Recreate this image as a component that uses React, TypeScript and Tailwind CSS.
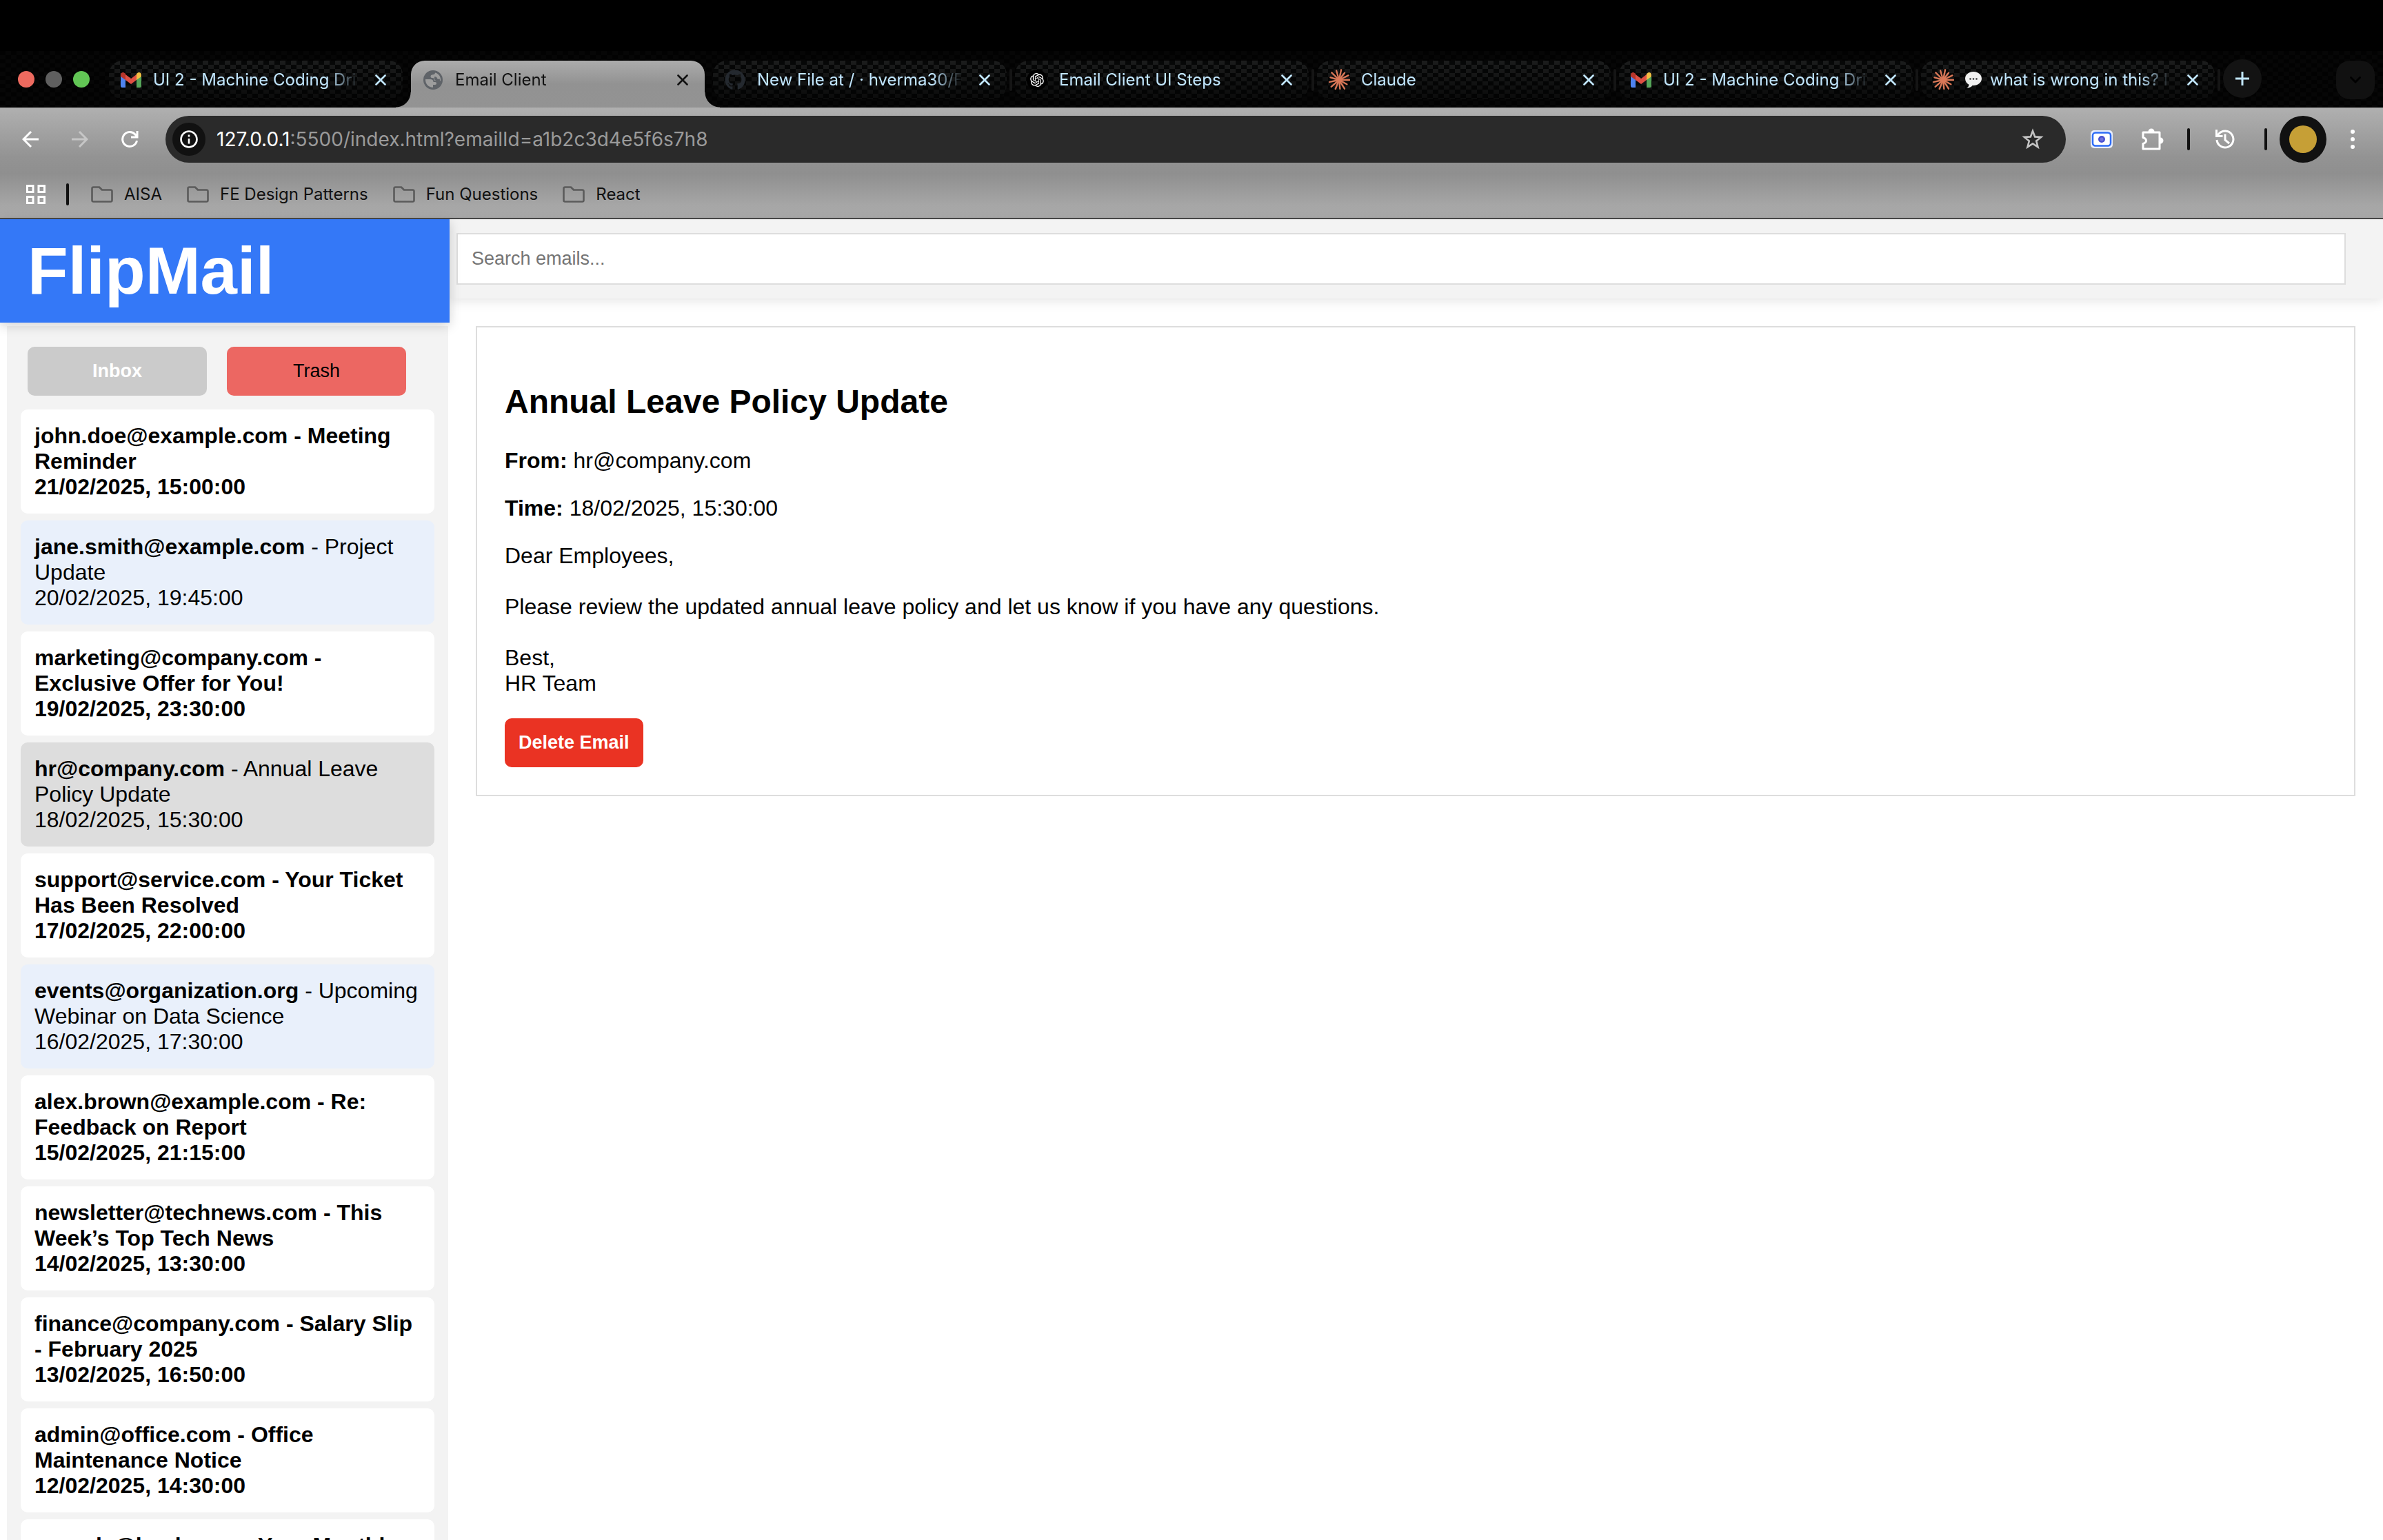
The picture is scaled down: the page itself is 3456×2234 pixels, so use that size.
import type { ReactNode } from "react";
import { FaGithub } from "react-icons/fa";
import { RiOpenaiFill } from "react-icons/ri";

type Email = { id: string; from: string; subject: string; time: string; state: "unread" | "read" | "open" };

const emails: Email[] = [
  { id: "1", from: "john.doe@example.com", subject: "Meeting Reminder", time: "21/02/2025, 15:00:00", state: "unread" },
  { id: "2", from: "jane.smith@example.com", subject: "Project Update", time: "20/02/2025, 19:45:00", state: "read" },
  { id: "3", from: "marketing@company.com", subject: "Exclusive Offer for You!", time: "19/02/2025, 23:30:00", state: "unread" },
  { id: "a1b2c3d4e5f6s7h8", from: "hr@company.com", subject: "Annual Leave Policy Update", time: "18/02/2025, 15:30:00", state: "open" },
  { id: "5", from: "support@service.com", subject: "Your Ticket Has Been Resolved", time: "17/02/2025, 22:00:00", state: "unread" },
  { id: "6", from: "events@organization.org", subject: "Upcoming Webinar on Data Science", time: "16/02/2025, 17:30:00", state: "read" },
  { id: "7", from: "alex.brown@example.com", subject: "Re: Feedback on Report", time: "15/02/2025, 21:15:00", state: "unread" },
  { id: "8", from: "newsletter@technews.com", subject: "This Week’s Top Tech News", time: "14/02/2025, 13:30:00", state: "unread" },
  { id: "9", from: "finance@company.com", subject: "Salary Slip - February 2025", time: "13/02/2025, 16:50:00", state: "unread" },
  { id: "10", from: "admin@office.com", subject: "Office Maintenance Notice", time: "12/02/2025, 14:30:00", state: "unread" },
  { id: "11", from: "noreply@bank.com", subject: "Your Monthly Statement", time: "11/02/2025, 12:00:00", state: "unread" },
];

function GmailIcon() {
  return (
    <svg viewBox="0 0 30 22" className="h-[22px] w-[30px]" aria-hidden="true">
      <path d="M0 4v16a2 2 0 0 0 2 2h5V9z" fill="#4f83ee" />
      <path d="M23 9v13h5a2 2 0 0 0 2-2V4z" fill="#56a65a" />
      <path d="M7 3v8l8 6 8-6V3l-8 6z" fill="#df5044" />
      <path d="M0 3.5C0 .6 3.400-1 5.700.9L7 2v9L0 6z" fill="#b8352b" />
      <path d="M30 3.500C30 .6 26.600-1 24.300.9L23 2v9l7-5z" fill="#f3bf42" />
    </svg>
  );
}

function GlobeIcon() {
  return (
    <svg viewBox="0 0 28 28" className="h-7 w-7" aria-hidden="true">
      <circle cx="14" cy="14" r="14" fill="#5f6368" />
      <path d="M3 13h7c3 0 4.500 1.500 4.500 4h2.500c1.500 0 2 .8 2 2s-.8 2-2 2h-3v3.800C7.500 25 2.600 19.500 3 13z" fill="#9d9d9d" />
      <path d="M17 3.500c-.3 1.800-1 2.700-3 2.700-2.200 0-3.500 1-3.500 2.800 0 1.500 1 2 2.500 2 2 0 2.500.7 2.500 2.200 0 1.300.9 2 2.500 2H25C25.700 9.500 22 4.500 17 3.500z" fill="#9d9d9d" />
      <path d="M16 9.500c2-.6 3.400.2 3.800 1.800.4 1.500 1.700 1.700 4 1.200l.2 3-5 .5-3-3z" fill="#5f6368" />
    </svg>
  );
}

function GithubIcon() {
  return <FaGithub className="h-[30px] w-[30px] text-[#24292f]" aria-hidden="true" />;
}

function OpenAiIcon() {
  return (
    <span className="flex h-[30px] w-[30px] items-center justify-center rounded-full bg-black">
      <RiOpenaiFill className="h-6 w-6 text-white" aria-hidden="true" />
    </span>
  );
}

const rays = [
  [0, 15], [29, 13], [58, 15], [84, 13], [112, 14], [139, 15], [168, 14], [196, 13], [225, 15], [254, 14], [282, 15], [308, 13], [334, 15],
];

function BurstIcon() {
  return (
    <svg viewBox="-16 -16 32 32" className="h-[32px] w-[32px]" aria-hidden="true">
      {rays.map(([angle, length]) => (
        <path key={angle} d={`M0 0H${length}`} transform={`rotate(${angle})`} stroke="#d97757" strokeWidth="2.4" strokeLinecap="round" />
      ))}
      <circle r="4" fill="#d97757" />
    </svg>
  );
}

function BubbleIcon() {
  return (
    <svg viewBox="0 0 24 24" className="mr-3 h-6 w-6 shrink-0" aria-hidden="true">
      <path d="M12 0C5.200 0 0 4.400 0 10c0 4 2.300 7 5.500 8.700C5.600 21 4 22.600 2 23.500c4 .2 7-1.300 8.500-3.600H12c6.800 0 12-4.300 12-9.900S18.800 0 12 0z" fill="#f1f1f1" />
      <circle cx="7.500" cy="10.500" r="1.300" fill="#333" />
      <circle cx="12" cy="10.500" r="1.300" fill="#333" />
      <circle cx="16.500" cy="10.500" r="1.300" fill="#333" />
    </svg>
  );
}

type Tab = { title: string; icon: ReactNode; lead?: ReactNode; active?: boolean; bar?: boolean };

const tabs: Tab[] = [
  { title: "UI 2 - Machine Coding Drive", icon: <GmailIcon /> },
  { title: "Email Client", icon: <GlobeIcon />, active: true },
  { title: "New File at / · hverma30/Flip", icon: <GithubIcon />, bar: true },
  { title: "Email Client UI Steps", icon: <OpenAiIcon />, bar: true },
  { title: "Claude", icon: <BurstIcon />, bar: true },
  { title: "UI 2 - Machine Coding Drive", icon: <GmailIcon />, bar: true },
  { title: "what is wrong in this? I", icon: <BurstIcon />, lead: <BubbleIcon />, bar: true },
];

function TabItem({ tab }: { tab: Tab }) {
  const shape = tab.active
    ? "relative h-[68px] rounded-t-[20px] bg-linear-to-b from-[#acacac] via-[#929292] to-[#939393] pb-3 text-[#111] before:absolute before:bottom-0 before:-left-[22px] before:size-[22px] before:bg-[radial-gradient(circle_at_0_0,transparent_21px,#939393_22px)] after:absolute after:-right-[22px] after:bottom-0 after:size-[22px] after:bg-[radial-gradient(circle_at_100%_0,transparent_21px,#939393_22px)]"
    : "mb-3 h-14 rounded-[20px] bg-[linear-gradient(#0000,#0009),repeating-conic-gradient(#1b1c1c_0_25%,#060707_0_50%)] bg-size-[100%_100%,16px_12px] text-[#c2e7ff]";
  return (
    <>
      <div role="tab" aria-selected={!!tab.active} className={`flex min-w-0 max-w-[426px] flex-1 items-center pr-6 pl-4 ${shape}`}>
        <span className="mr-4 flex w-8 shrink-0 justify-center">{tab.icon}</span>
        <span className="mr-5 flex flex-1 items-center overflow-hidden text-2xl whitespace-nowrap mask-[linear-gradient(to_right,#000_calc(100%-48px),transparent_calc(100%-4px))]">
          {tab.lead}
          {tab.title}
        </span>
        <button aria-label={`Close ${tab.title}`} className="shrink-0">
          <svg viewBox="0 0 16 16" className="h-4 w-4" stroke="currentColor" strokeWidth="2.600" strokeLinecap="round">
            <path d="M1.500 1.500l13 13M14.500 1.500l-13 13" />
          </svg>
        </button>
      </div>
      <span className="flex h-[68px] w-3 shrink-0 justify-center pt-3">
        {tab.bar && <span className="h-8 w-1 rounded-full bg-[#151515]" />}
      </span>
    </>
  );
}

function TabStrip() {
  return (
    <div className="flex h-[82px] items-end bg-[repeating-conic-gradient(#060606_0_25%,#020202_0_50%)] bg-size-[16px_12px] pr-3 pl-[26px]">
      <div className="mr-7 flex h-full items-center gap-4">
        <button aria-label="Close window" className="size-6 rounded-full bg-[#ed6a5f]" />
        <button aria-label="Minimise window" className="size-6 rounded-full bg-[#5f5f5f]" />
        <button aria-label="Zoom window" className="size-6 rounded-full bg-[#62c655]" />
      </div>
      <div role="tablist" className="flex min-w-0 flex-1 items-end">
        {tabs.map((tab, i) => (
          <TabItem key={i} tab={tab} />
        ))}
        <button aria-label="New tab" className="mb-3.5 flex size-14 shrink-0 items-center justify-center rounded-full bg-[#131313]">
          <svg viewBox="0 0 20 20" className="h-5 w-5" stroke="#c2e7ff" strokeWidth="3">
            <path d="M10 0v20M0 10h20" />
          </svg>
        </button>
      </div>
      <button aria-label="Search tabs" className="mb-3 flex size-14 items-center justify-center rounded-[20px] bg-[#111]">
        <svg viewBox="0 0 16 10" className="h-2.5 w-4" fill="none" stroke="#000" strokeWidth="3" strokeLinecap="round">
          <path d="M1.500 1.500L8 8l6.500-6.500" />
        </svg>
      </button>
    </div>
  );
}

function NavButton({ label, className = "w-[72px]", children }: { label: string; className?: string; children: ReactNode }) {
  return (
    <button aria-label={label} className={`flex h-14 shrink-0 items-center justify-center ${className}`}>
      {children}
    </button>
  );
}

function Toolbar() {
  return (
    <div className="flex h-[92px] items-center pr-1.5 pl-2">
      <NavButton label="Back">
        <svg viewBox="0 0 24 24" className="h-6 w-6" fill="none" stroke="#fff" strokeWidth="3">
          <path d="M24 12H2M13 1L2 12l11 11" />
        </svg>
      </NavButton>
      <NavButton label="Forward">
        <svg viewBox="0 0 24 24" className="h-6 w-6" fill="none" stroke="#c6c6c6" strokeWidth="3">
          <path d="M0 12h22M11 1l11 11-11 11" />
        </svg>
      </NavButton>
      <NavButton label="Reload">
        <svg viewBox="0 0 26 26" className="h-[26px] w-[26px]" fill="none" stroke="#fff" strokeWidth="3">
          <path d="M23.500 15A10.500 10.500 0 1 1 21 6l2.500 3M24 1v9h-9" />
        </svg>
      </NavButton>
      <div className="ml-4 flex h-[68px] min-w-0 flex-1 items-center rounded-full bg-[#2a2a2a] pr-8 pl-2.5">
        <button aria-label="View site information" className="mr-4 flex size-12 shrink-0 items-center justify-center rounded-full bg-[#111]">
          <svg viewBox="0 0 26 26" className="h-[26px] w-[26px]" fill="none" stroke="#fff" strokeWidth="2.600">
            <circle cx="13" cy="13" r="11.500" />
            <path d="M13 12v7.500M13 6.500v3" />
          </svg>
        </button>
        <div role="textbox" aria-label="Address" className="flex-1 truncate text-[28px] text-[#9a9a9a]">
          <span className="text-white">127.0.0.1</span>:5500/index.html?emailId=a1b2c3d4e5f6s7h8
        </div>
        <button aria-label="Bookmark this page">
          <svg viewBox="0 0 32 32" className="h-8 w-8" fill="none" stroke="#c4c4c4" strokeWidth="2.600">
            <path d="M16 4l3.200 8.400 9 .5-7 5.700 2.300 8.700L16 22.400l-7.500 4.900 2.300-8.700-7-5.700 9-.5z" />
          </svg>
        </button>
      </div>
      <NavButton label="Screen recorder" className="ml-[15px] w-[74px]">
        <svg viewBox="0 0 32 26" className="h-[26px] w-8">
          <rect width="32" height="26" rx="5" fill="#e8eefc" />
          <rect x="3" y="3.500" width="26" height="19" rx="4" fill="#fff" stroke="#2f6df6" strokeWidth="2.500" />
          <circle cx="16" cy="13" r="5" fill="#4a50cf" />
          <circle cx="16" cy="13" r="2.500" fill="#6f74dc" />
        </svg>
      </NavButton>
      <NavButton label="Extensions" className="w-[74px]">
        <svg viewBox="0 0 32 32" className="h-8 w-8">
          <path d="M2 6h24v9.500q0 3 0 5V30H2v-7.500c6-2 6-7 0-9z" fill="none" stroke="#fff" strokeWidth="3" strokeLinejoin="round" />
          <path d="M9.500 5a4.500 4.500 0 0 1 9 0zM27 13.500a4.500 4.500 0 0 1 0 9z" fill="#fff" />
        </svg>
      </NavButton>
      <span className="ml-[13px] h-8 w-1 rounded-full bg-[#111]" />
      <NavButton label="History" className="w-[102px]">
        <svg viewBox="0 0 28 28" className="h-7 w-7" fill="none" stroke="#fff" strokeWidth="3">
          <path d="M2 15a12 12 0 1 0 3-9L2 9M1.500 0v9.500h9M14 6.500V15l6 5" />
        </svg>
      </NavButton>
      <span className="ml-1.5 h-8 w-1 rounded-full bg-[#111]" />
      <button aria-label="Profile" className="ml-[18px] flex size-[68px] shrink-0 items-center justify-center rounded-full bg-[#111]">
        <span className="size-10 rounded-full bg-[#c69f36]" />
      </button>
      <NavButton label="Menu" className="w-[76px]">
        <svg viewBox="0 0 6 28" className="h-7 w-1.5" fill="#fff">
          <circle cx="3" cy="3" r="3" />
          <circle cx="3" cy="14" r="3" />
          <circle cx="3" cy="25" r="3" />
        </svg>
      </NavButton>
    </div>
  );
}

function Bookmarks() {
  return (
    <nav aria-label="Bookmarks" className="flex h-[68px] items-center pl-[38px] text-2xl text-[#111]">
      <button aria-label="Apps">
        <svg viewBox="0 0 28 28" className="h-7 w-7" fill="none" stroke="#fff" strokeWidth="3">
          <path d="M1.500 1.500h8.500v9H1.500zM18 1.500h8.500v9H18zM1.500 17.500h8.500v9H1.500zM18 17.500h8.500v9H18z" />
        </svg>
      </button>
      <span className="mr-8 ml-[30px] h-8 w-1 rounded-full bg-[#111]" />
      <div className="flex items-center gap-9">
        {["AISA", "FE Design Patterns", "Fun Questions", "React"].map((name) => (
          <a key={name} href="#" className="flex items-center gap-4">
            <svg viewBox="0 0 32 24" className="h-6 w-8" fill="none" stroke="#5b5b5b" strokeWidth="2.600" strokeLinejoin="round">
              <path d="M1.500 3.500q0-2 2-2H12l4 4h12.500q2 0 2 2v13q0 2-2 2h-25q-2 0-2-2z" />
            </svg>
            {name}
          </a>
        ))}
      </div>
    </nav>
  );
}

const cardColors = { unread: "bg-white font-bold", read: "bg-[#e9f0fb]", open: "bg-[#dddddd]" };

function Sidebar() {
  return (
    <aside className="flex w-[652px] shrink-0 flex-col">
      <header className="relative z-10 bg-[#3478f7] px-10 py-5 shadow-[0_4px_16px_#0000002e]">
        <h1 className="text-[96px] leading-[110px] font-bold text-white">FlipMail</h1>
      </header>
      <div className="mt-[5px] mr-0.5 ml-2.5 flex-1 bg-[#f3f3f3] px-5 pt-[30px]">
        <div className="mb-5 flex gap-[29px] px-2.5 text-[27px]">
          <button className="h-[71px] w-[260px] rounded-[10px] bg-[#cbcbcb] font-bold text-white">Inbox</button>
          <button className="h-[71px] w-[260px] rounded-[10px] bg-[#ec6762]">Trash</button>
        </div>
        <ul className="flex flex-col gap-2.5">
          {emails.map((m) => (
            <li key={m.id}>
              <a href={`?emailId=${m.id}`} className={`block rounded-[10px] p-5 ${cardColors[m.state]}`}>
                <strong>{m.from}</strong> - {m.subject}
                <br />
                {m.time}
              </a>
            </li>
          ))}
        </ul>
      </div>
    </aside>
  );
}

function Reader() {
  return (
    <main className="min-w-0 flex-1">
      <div className="bg-[#f3f3f3] py-5 pr-[54px] pl-2.5 shadow-[0_4px_16px_#0000001a]">
        <input
          type="search"
          aria-label="Search emails"
          placeholder="Search emails..."
          className="block h-[75px] w-full border-2 border-[#dddddd] bg-white px-5 text-[27px] placeholder:text-[#757575]"
        />
      </div>
      <article className="mt-10 mr-10 ml-[38px] border-2 border-[#dddddd] p-10">
        <h2 className="my-10 text-5xl leading-[55px] font-bold">Annual Leave Policy Update</h2>
        <p className="mb-8">
          <strong>From:</strong> hr@company.com
        </p>
        <p className="mb-8">
          <strong>Time:</strong> 18/02/2025, 15:30:00
        </p>
        <p className="mb-8 whitespace-pre-line">
          {"Dear Employees,\n\nPlease review the updated annual leave policy and let us know if you have any questions.\n\nBest,\nHR Team"}
        </p>
        <button className="block h-[71px] rounded-[10px] bg-[#ea3323] px-5 text-[27px] font-bold text-white">Delete Email</button>
      </article>
    </main>
  );
}

export default function App() {
  return (
    <div className="flex h-screen flex-col overflow-hidden bg-white">
      <div className="bg-black pt-[74px] font-['Inter',sans-serif]">
        <TabStrip />
        <div className="border-b-2 border-[#484848] bg-[linear-gradient(#b0b0b0,#939393_45%,#8f8f8f_60%,#a6a6a6_88%,#a9a9a9)]">
          <Toolbar />
          <Bookmarks />
        </div>
      </div>
      <div className="flex min-h-0 flex-1 font-['Liberation_Sans',Arial,sans-serif] text-[32px] leading-[37px] text-black">
        <Sidebar />
        <Reader />
      </div>
    </div>
  );
}
